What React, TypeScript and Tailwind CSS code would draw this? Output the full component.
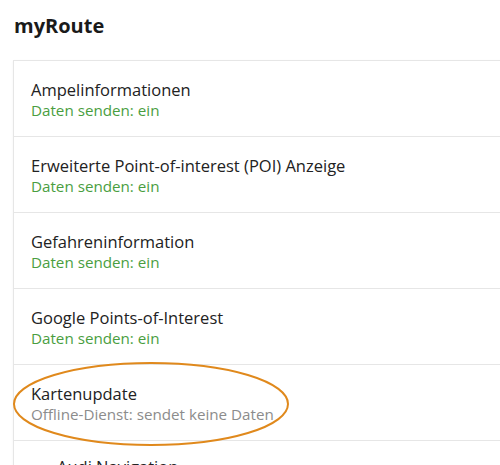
const rows = [
  { title: "Ampelinformationen", status: "Daten senden: ein", on: true },
  { title: "Erweiterte Point-of-interest (POI) Anzeige", status: "Daten senden: ein", on: true },
  { title: "Gefahreninformation", status: "Daten senden: ein", on: true },
  { title: "Google Points-of-Interest", status: "Daten senden: ein", on: true },
  { title: "Kartenupdate", status: "Offline-Dienst: sendet keine Daten", on: false },
]

export default function App() {
  return (
    <div className="w-[500px] h-[465px] overflow-hidden bg-white relative" style={{ fontFamily: '"Open Sans", "Noto Sans", sans-serif' }}>
      <h1 className="pl-[14px] pt-[11px] h-[60px] text-[20px] font-bold text-[#1a1a1a]">myRoute</h1>
      <div className="ml-[13px] w-[520px] border border-[#e6e6e6] shadow-[0_1px_2px_rgba(0,0,0,0.06)]">
        {rows.map((r) => (
          <div key={r.title} className="h-[76px] flex flex-col justify-center pl-[17px] pt-[2px] border-b border-[#e6e6e6]">
            <div className="text-[16.5px] leading-[20px] text-[#222]">{r.title}</div>
            <div className={`text-[15.2px] leading-[20px] ${r.on ? "text-[#4a9e3f]" : "text-[#8c8c8c]"}`}>{r.status}</div>
          </div>
        ))}
        <div className="h-[40px] pl-[43px] pt-[14px] text-[16.5px] text-[#222]">Audi Navigation</div>
      </div>
      <svg className="absolute left-0 top-0 pointer-events-none" width="500" height="465">
        <ellipse cx="151" cy="404" rx="137" ry="41" fill="none" stroke="#e0891c" strokeWidth="2" />
      </svg>
    </div>
  )
}
